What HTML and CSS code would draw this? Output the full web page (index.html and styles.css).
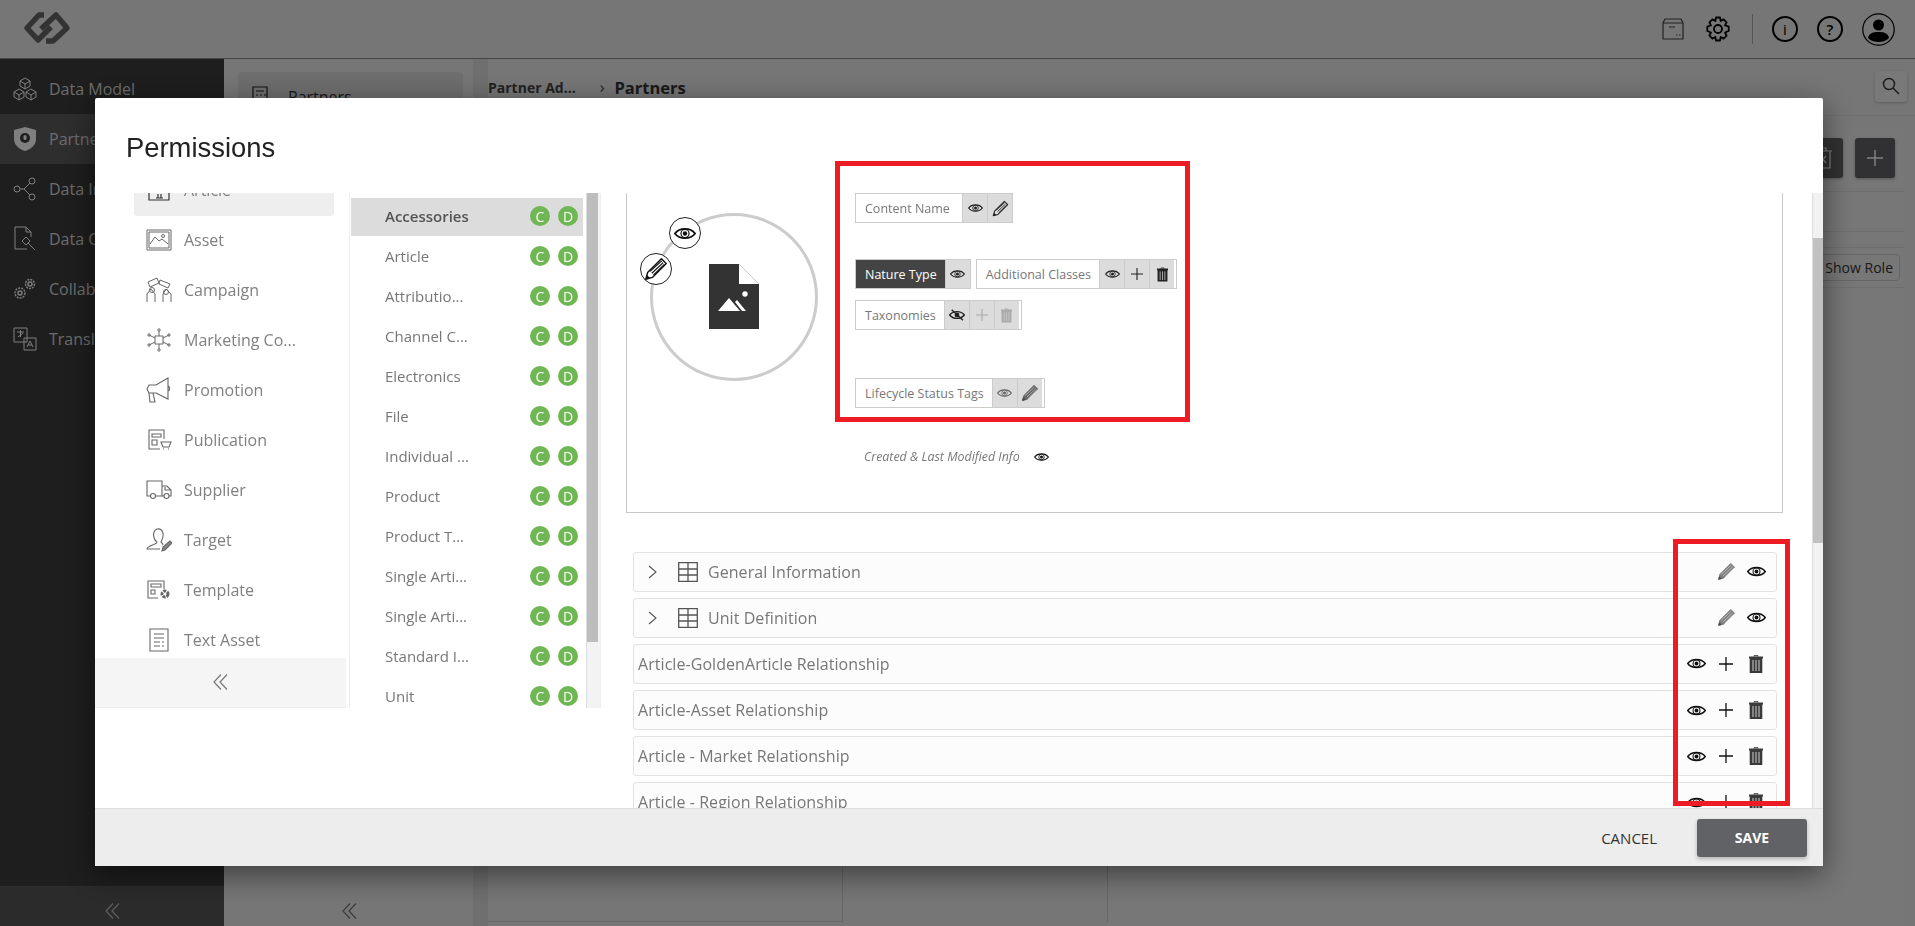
FILE: index.html
```html
<!DOCTYPE html>
<html lang="en">
<head>
    <meta charset="UTF-8">
    <title>Permissions</title>
    <link rel="stylesheet" href="styles.css">
</head>
<body>

    <!-- Shared icons -->
    <svg class="sprite" xmlns="http://www.w3.org/2000/svg">
        <symbol id="i-eye" viewBox="0 0 24 16">
            <path d="M1 8C6 1.2 18 1.2 23 8C18 14.8 6 14.8 1 8Z" fill="none" stroke="currentColor" stroke-width="2"/>
            <circle cx="12" cy="8" r="4.400" fill="none" stroke="currentColor" stroke-width="1.300"/>
            <circle cx="12" cy="8" r="2.400" fill="currentColor"/>
        </symbol>
        <symbol id="i-eye-off" viewBox="0 0 24 18">
            <path d="M1 9C6 2.200 18 2.200 23 9C18 15.800 6 15.800 1 9Z" fill="none" stroke="currentColor" stroke-width="2"/>
            <circle cx="12" cy="9" r="3.600" fill="currentColor"/>
            <path d="M4 1L21 17" stroke="currentColor" stroke-width="2"/>
        </symbol>
        <symbol id="i-pencil" viewBox="0 0 20 20">
            <path d="M1.500 18.500L3 13L14.500 1.500L18.500 5.500L7 17Z" fill="none" stroke="currentColor" stroke-width="1.200" stroke-linejoin="round"/>
            <path d="M5 12L14.800 3.200M6.500 13.500L16 4.700M8 15L17 6.200" stroke="currentColor" stroke-width="1"/>
            <path d="M1.500 18.500L2.500 15L5 17.500Z" fill="currentColor"/>
        </symbol>
        <symbol id="i-pencil-solid" viewBox="0 0 20 20">
            <path d="M1.500 18.500L3 13L14.500 1.500L18.500 5.500L7 17Z" fill="currentColor" stroke="currentColor" stroke-width="1" stroke-linejoin="round"/>
            <path d="M4.500 13L14.800 3.500M6.500 14.500L16.500 5.200M8 16L17.500 6.800" stroke="#fff" stroke-width=".8" opacity=".6"/>
            <path d="M1.500 18.500L2.500 15L5 17.500Z" fill="#444"/>
        </symbol>
        <symbol id="i-plus" viewBox="0 0 14 14">
            <path d="M7 0V14M0 7H14" stroke="currentColor" stroke-width="1.300"/>
        </symbol>
        <symbol id="i-trash" viewBox="0 0 14 18">
            <path d="M5 1.500V.7H9V1.500" fill="none" stroke="currentColor" stroke-width="1"/>
            <path d="M0 1.500H14V3.500H13.300V18H.7V3.500H0Z" fill="currentColor"/>
            <path d="M4 5V16M7 5V16M10 5V16" stroke="#ccc" stroke-width="1"/>
        </symbol>
        <symbol id="i-grid" viewBox="0 0 20 20">
            <path d="M.7.7H19.300V19.300H.7ZM.7 7H19.300M.7 13H19.300M10 .7V19.300" fill="none" stroke="currentColor" stroke-width="1.300"/>
        </symbol>
        <symbol id="i-collapse" viewBox="0 0 15 16">
            <path d="M8 .5L1 8L8 15.500M14 .5L7 8L14 15.500" fill="none" stroke="currentColor" stroke-width="1.200"/>
        </symbol>
    </svg>

    <div class="app">
        <header class="topbar">
            <svg class="logo" viewBox="0 0 90 58" width="90" height="58">
                <path d="M44 15H39L27 28L38 40L51 27" fill="none" stroke="#666" stroke-width="5.500" stroke-linejoin="round"/>
                <path d="M46 41H53L67 28L56 15L41 29" fill="none" stroke="#666" stroke-width="5.500" stroke-linejoin="round"/>
            </svg>
            <div class="topbar-tools">
                <svg class="tool tool-box" width="22" height="22" viewBox="0 0 22 22" fill="none" stroke="#444" stroke-width="1.200">
                    <path d="M3 1H19L21 5V21H1V5ZM1 5H21M7 9H13M14 17H15.500M17 17H18.500"/>
                </svg>
                <svg class="tool" width="24" height="26" viewBox="0 0 24 26" fill="none" stroke="#000" stroke-width="1.800">
                    <circle cx="12" cy="13" r="4"/>
                    <path d="M10 1.500H14L14.700 5L17.600 3.400L20.600 6.400L19 9.400L22.700 10.500V15L19 16.500L20.600 19.600L17.600 22.600L14.700 21L14 24.500H10L9.300 21L6.400 22.600L3.400 19.600L5 16.500L1.300 15V10.500L5 9.400L3.400 6.400L6.400 3.400L9.300 5Z" stroke-linejoin="round"/>
                </svg>
                <span class="tool-sep"></span>
                <span class="round-tool round-info">i</span>
                <span class="round-tool">?</span>
                <svg class="tool" width="33" height="33" viewBox="0 0 33 33">
                    <circle cx="16.500" cy="16.500" r="15.700" fill="none" stroke="#000" stroke-width="1.200"/>
                    <circle cx="16.500" cy="12" r="5.500" fill="#000"/>
                    <path d="M6 25C7 20 11 19 16.500 19C22 19 26 20 27 25C24 28 20 29 16.500 29C13 29 9 28 6 25Z" fill="#000"/>
                </svg>
            </div>
        </header>

        <div class="app-body">
            <aside class="sidebar">
                <ul class="sidebar-list">
                    <li class="sidebar-item">
                        <svg width="24" height="24" viewBox="0 0 24 24" fill="none" stroke="#fff" stroke-width="1"><path d="M12 1L17 4V9L12 12L7 9V4ZM6 12L11 15V20L6 23L1 20V15ZM18 12L23 15V20L18 23L13 20V15ZM7 4L12 7L17 4M12 7V12M1 15L6 18L11 15M6 18V23M13 15L18 18L23 15M18 18V23"/></svg>
                        Data Model
                    </li>
                    <li class="sidebar-item active">
                        <svg width="24" height="26" viewBox="0 0 24 26"><path d="M12 1L23 4V13C23 19 18 23 12 25C6 23 1 19 1 13V4Z" fill="#fff"/><circle cx="12" cy="12" r="5" fill="#3c3c3c"/><rect x="10.500" y="9" width="3" height="5" rx="1.500" fill="#fff"/></svg>
                        Partner Admin
                    </li>
                    <li class="sidebar-item">
                        <svg width="24" height="24" viewBox="0 0 24 24" fill="none" stroke="#fff" stroke-width="1"><circle cx="4" cy="12" r="3"/><circle cx="19" cy="4" r="3"/><circle cx="19" cy="20" r="3"/><path d="M7 12H11L17 6M11 12L17 18"/></svg>
                        Data Integration
                    </li>
                    <li class="sidebar-item">
                        <svg width="24" height="26" viewBox="0 0 24 26" fill="none" stroke="#fff" stroke-width="1"><path d="M14 23H2V1H13L18 6V11M13 1V6H18M9 15L13 11L17 15L13 19ZM15 17L22 24"/></svg>
                        Data Quality
                    </li>
                    <li class="sidebar-item">
                        <svg width="24" height="24" viewBox="0 0 24 24" fill="none" stroke="#fff" stroke-width="1.400"><circle cx="17" cy="7" r="4.500" stroke-dasharray="2 1"/><circle cx="17" cy="7" r="2"/><circle cx="7" cy="16" r="5" stroke-dasharray="2 1"/><circle cx="7" cy="16" r="2"/></svg>
                        Collaboration
                    </li>
                    <li class="sidebar-item">
                        <svg width="24" height="24" viewBox="0 0 24 24" fill="none" stroke="#fff" stroke-width="1"><path d="M1 1H14V15H1ZM11 11H23V23H11ZM4 5H11M7.500 3V10M5 10L10 6M14 20L17 14L20 20M15 18H19"/></svg>
                        Translations
                    </li>
                </ul>
                <div class="sidebar-foot">
                    <svg class="collapse-icon" width="15" height="16"><use href="#i-collapse"/></svg>
                </div>
            </aside>

            <section class="side-panel">
                <div class="side-column">
                    <div class="side-card">
                        <svg width="20" height="24" viewBox="0 0 20 24" fill="none" stroke="#222" stroke-width="1.200"><path d="M2 23V2H16V18M5 6H13M5 10H7M9 10H11M13 10H15M5 14H7M9 14H11M13 18L18 18V23H8V20"/></svg>
                        <span>Partners</span>
                    </div>
                    <svg class="side-collapse" width="15" height="16"><use href="#i-collapse"/></svg>
                </div>
                <div class="side-strip"></div>
            </section>

            <main class="main">
                <div class="crumbs">
                    <span class="crumb">Partner Ad...</span>
                    <span class="crumb-sep">&#8250;</span>
                    <span class="crumb-current">Partners</span>
                    <button class="search-button">
                        <svg width="18" height="18" viewBox="0 0 18 18" fill="none" stroke="#333" stroke-width="1.400"><circle cx="7" cy="7" r="5.500"/><path d="M11 11L17 17"/></svg>
                    </button>
                </div>
                <div class="main-columns">
                    <div class="main-col main-col-list"></div>
                    <div class="main-col main-col-mid"></div>
                    <div class="main-col main-col-roles">
                        <div class="roles-toolbar">
                            <span class="dark-button"><svg width="20" height="22" viewBox="0 0 20 22" fill="none" stroke="#fff" stroke-width="1.200"><path d="M1 4H19M7 4V1H13V4M3 4V21H17V4M7 9L13 16M13 9L7 16"/></svg></span>
                            <span class="dark-button"><svg width="16" height="16"><use href="#i-plus"/></svg></span>
                        </div>
                        <div class="roles-row"></div>
                        <div class="roles-row roles-row-button"><span class="role-button">Show Role</span></div>
                    </div>
                </div>
            </main>
        </div>
    </div>

    <!-- Dialog -->
    <div class="overlay">
        <div class="modal">
            <h2 class="modal-title">Permissions</h2>

            <div class="modal-body">
                <div class="nav-col">
                    <div class="nav-scroll">
                        <ul class="nav-list">
                            <li class="nav-item active">
                                <svg width="26" height="24" viewBox="0 0 26 24" fill="none" stroke="#333" stroke-width="1.200"><path d="M3 2H23V22H3ZM12 16V20M15 16V20M10 20H17"/></svg>
                                Article
                            </li>
                            <li class="nav-item">
                                <svg width="26" height="22" viewBox="0 0 26 22" fill="none" stroke="#666" stroke-width="1"><path d="M1 1H25V21H1ZM3 3H23V19H3ZM4 15L9 8L13 12L16 10L22 15"/><circle cx="17" cy="7" r="1.500"/></svg>
                                Asset
                            </li>
                            <li class="nav-item">
                                <svg width="26" height="26" viewBox="0 0 26 26" fill="none" stroke="#666" stroke-width="1"><path d="M2 5L11 1L13 6L4 10ZM14 3L24 7L22 11L13 7ZM1 25V17L5 12L9 17V25M17 25V17L20 12L25 17V25"/><circle cx="6" cy="13" r="2.500"/><circle cx="20" cy="15" r="2.500"/></svg>
                                Campaign
                            </li>
                            <li class="nav-item">
                                <svg width="26" height="24" viewBox="0 0 26 24" fill="none" stroke="#666" stroke-width="1"><path d="M9 8H17V16H9ZM13 3V8M13 16V21M3 7L9 10M23 7L17 10M3 17L9 14M23 17L17 14"/><circle cx="13" cy="2" r="1.200"/><circle cx="13" cy="22" r="1.200"/><circle cx="3" cy="7" r="1.200"/><circle cx="23" cy="7" r="1.200"/><circle cx="3" cy="17" r="1.200"/><circle cx="23" cy="17" r="1.200"/></svg>
                                Marketing Co...
                            </li>
                            <li class="nav-item">
                                <svg width="26" height="26" viewBox="0 0 26 26" fill="none" stroke="#666" stroke-width="1.100"><path d="M22 1V22L10 16H3L1 12L3 8H10ZM7 16L9 25H4L3 16M22 9C24 9 24 14 22 14"/></svg>
                                Promotion
                            </li>
                            <li class="nav-item">
                                <svg width="26" height="22" viewBox="0 0 26 22" fill="none" stroke="#666" stroke-width="1.100"><path d="M18 10V1H3V20H14M6 5H15V8H6ZM6 11H11V16H6ZM15 13H25L23 18H17L15 13ZM17 20H18M22 20H23"/></svg>
                                Publication
                            </li>
                            <li class="nav-item">
                                <svg width="26" height="20" viewBox="0 0 26 20" fill="none" stroke="#666" stroke-width="1.100"><path d="M5 16H1V1H16V16H9M16 6H21L25 10V16H23M16 16H18M19 7V10H25"/><circle cx="7" cy="16" r="2.500"/><circle cx="20.500" cy="16" r="2.500"/></svg>
                                Supplier
                            </li>
                            <li class="nav-item">
                                <svg width="26" height="24" viewBox="0 0 26 24" fill="none" stroke="#666" stroke-width="1.100"><path d="M11 14C7 11 6 3 11 1C17 0 19 7 15 14C16 15 17 16 17 17M11 14C11 17 1 17 1 21H14"/><path d="M16 23L17 19L24 13L26 15L19 22Z" fill="#888"/></svg>
                                Target
                            </li>
                            <li class="nav-item">
                                <svg width="26" height="20" viewBox="0 0 26 20" fill="none" stroke="#666" stroke-width="1.100"><path d="M18 9V1H2V18H12M5 4H15V7H5ZM5 10H9V14H5Z"/><circle cx="19" cy="14" r="3" stroke-width="3" stroke-dasharray="3 1"/></svg>
                                Template
                            </li>
                            <li class="nav-item">
                                <svg width="26" height="24" viewBox="0 0 26 24" fill="none" stroke="#666" stroke-width="1.100"><path d="M4 1H22V23H4ZM8 6H18M8 10H18M8 14H14M16 14H18M8 18H14M16 18H18"/></svg>
                                Text Asset
                            </li>
                        </ul>
                    </div>
                    <div class="nav-collapse">
                        <svg width="15" height="16"><use href="#i-collapse"/></svg>
                    </div>
                </div>

                <div class="type-col">
                    <ul class="type-list">
                        <li class="type-item active"><span>Accessories</span><b class="badge">C</b><b class="badge">D</b></li>
                        <li class="type-item"><span>Article</span><b class="badge">C</b><b class="badge">D</b></li>
                        <li class="type-item"><span>Attributio...</span><b class="badge">C</b><b class="badge">D</b></li>
                        <li class="type-item"><span>Channel C...</span><b class="badge">C</b><b class="badge">D</b></li>
                        <li class="type-item"><span>Electronics</span><b class="badge">C</b><b class="badge">D</b></li>
                        <li class="type-item"><span>File</span><b class="badge">C</b><b class="badge">D</b></li>
                        <li class="type-item"><span>Individual ...</span><b class="badge">C</b><b class="badge">D</b></li>
                        <li class="type-item"><span>Product</span><b class="badge">C</b><b class="badge">D</b></li>
                        <li class="type-item"><span>Product T...</span><b class="badge">C</b><b class="badge">D</b></li>
                        <li class="type-item"><span>Single Arti...</span><b class="badge">C</b><b class="badge">D</b></li>
                        <li class="type-item"><span>Single Arti...</span><b class="badge">C</b><b class="badge">D</b></li>
                        <li class="type-item"><span>Standard I...</span><b class="badge">C</b><b class="badge">D</b></li>
                        <li class="type-item"><span>Unit</span><b class="badge">C</b><b class="badge">D</b></li>
                    </ul>
                    <div class="type-scroll"><div class="type-thumb"></div></div>
                </div>

                <div class="detail-col">
                    <div class="preview-box">
                        <div class="circle">
                            <span class="bubble bubble-eye"><svg width="22" height="15"><use href="#i-eye"/></svg></span>
                            <span class="bubble bubble-pencil"><svg width="24" height="24"><use href="#i-pencil"/></svg></span>
                            <svg width="50" height="65" viewBox="0 0 50 65">
                                <path d="M0 0H30L50 20V65H0Z" fill="#333"/>
                                <path d="M30 0V20H50Z" fill="#fff"/>
                                <path d="M9 47L20 34L31 47ZM26 38L28 36L37 47H33Z" fill="#fff"/>
                                <circle cx="36" cy="30" r="2.700" fill="#fff"/>
                            </svg>
                        </div>
                        <div class="chips">
                            <div class="chip-row">
                                <div class="chip chip-wide">
                                    <span class="chip-label">Content Name</span>
                                    <span class="chip-cell"><svg width="15" height="10"><use href="#i-eye"/></svg></span>
                                    <span class="chip-cell"><svg width="17" height="17"><use href="#i-pencil"/></svg></span>
                                </div>
                            </div>
                            <div class="chip-row chip-row-second">
                                <div class="chip chip-dark">
                                    <span class="chip-label">Nature Type</span>
                                    <span class="chip-cell"><svg width="15" height="10"><use href="#i-eye"/></svg></span>
                                </div>
                                <div class="chip chip-pad">
                                    <span class="chip-label">Additional Classes</span>
                                    <span class="chip-cell"><svg width="15" height="10"><use href="#i-eye"/></svg></span>
                                    <span class="chip-cell"><svg width="12" height="12"><use href="#i-plus"/></svg></span>
                                    <span class="chip-cell"><svg width="11" height="15"><use href="#i-trash"/></svg></span>
                                </div>
                            </div>
                            <div class="chip-row chip-row-third">
                                <div class="chip chip-pad">
                                    <span class="chip-label">Taxonomies</span>
                                    <span class="chip-cell"><svg width="16" height="12"><use href="#i-eye-off"/></svg></span>
                                    <span class="chip-cell muted"><svg width="12" height="12"><use href="#i-plus"/></svg></span>
                                    <span class="chip-cell muted"><svg width="11" height="15"><use href="#i-trash"/></svg></span>
                                </div>
                            </div>
                            <div class="chip-row chip-row-fourth">
                                <div class="chip chip-pad">
                                    <span class="chip-label">Lifecycle Status Tags</span>
                                    <span class="chip-cell soft"><svg width="15" height="10"><use href="#i-eye"/></svg></span>
                                    <span class="chip-cell soft"><svg width="18" height="18"><use href="#i-pencil-solid"/></svg></span>
                                </div>
                            </div>
                            <div class="created-info">
                                <span>Created &amp; Last Modified Info</span>
                                <svg width="15" height="10"><use href="#i-eye"/></svg>
                            </div>
                        </div>
                    </div>

                    <div class="section-rows">
                        <div class="section-row">
                            <svg class="row-chevron" width="9" height="14" viewBox="0 0 9 14"><path d="M1 1L8 7L1 13" fill="none" stroke="#555" stroke-width="1.100"/></svg>
                            <svg class="row-grid" width="20" height="20"><use href="#i-grid"/></svg>
                            <span class="row-title">General Information</span>
                            <span class="row-action soft"><svg width="19" height="19"><use href="#i-pencil-solid"/></svg></span>
                            <span class="row-action"><svg width="19" height="13"><use href="#i-eye"/></svg></span>
                        </div>
                        <div class="section-row">
                            <svg class="row-chevron" width="9" height="14" viewBox="0 0 9 14"><path d="M1 1L8 7L1 13" fill="none" stroke="#555" stroke-width="1.100"/></svg>
                            <svg class="row-grid" width="20" height="20"><use href="#i-grid"/></svg>
                            <span class="row-title">Unit Definition</span>
                            <span class="row-action soft"><svg width="19" height="19"><use href="#i-pencil-solid"/></svg></span>
                            <span class="row-action"><svg width="19" height="13"><use href="#i-eye"/></svg></span>
                        </div>
                        <div class="section-row">
                            <span class="row-title">Article-GoldenArticle Relationship</span>
                            <span class="row-action"><svg width="19" height="13"><use href="#i-eye"/></svg></span>
                            <span class="row-action"><svg width="14" height="14"><use href="#i-plus"/></svg></span>
                            <span class="row-action dark"><svg width="14" height="18"><use href="#i-trash"/></svg></span>
                        </div>
                        <div class="section-row">
                            <span class="row-title">Article-Asset Relationship</span>
                            <span class="row-action"><svg width="19" height="13"><use href="#i-eye"/></svg></span>
                            <span class="row-action"><svg width="14" height="14"><use href="#i-plus"/></svg></span>
                            <span class="row-action dark"><svg width="14" height="18"><use href="#i-trash"/></svg></span>
                        </div>
                        <div class="section-row">
                            <span class="row-title">Article - Market Relationship</span>
                            <span class="row-action"><svg width="19" height="13"><use href="#i-eye"/></svg></span>
                            <span class="row-action"><svg width="14" height="14"><use href="#i-plus"/></svg></span>
                            <span class="row-action dark"><svg width="14" height="18"><use href="#i-trash"/></svg></span>
                        </div>
                        <div class="section-row">
                            <span class="row-title">Article - Region Relationship</span>
                            <span class="row-action"><svg width="19" height="13"><use href="#i-eye"/></svg></span>
                            <span class="row-action"><svg width="14" height="14"><use href="#i-plus"/></svg></span>
                            <span class="row-action dark"><svg width="14" height="18"><use href="#i-trash"/></svg></span>
                        </div>
                    </div>
                </div>

                <div class="modal-scroll"><div class="modal-thumb"></div></div>
            </div>

            <div class="modal-footer">
                <button class="cancel-button">CANCEL</button>
                <button class="save-button">SAVE</button>
            </div>

            <!-- Red annotation boxes -->
            <div class="mark mark-chips"></div>
            <div class="mark mark-actions"></div>
        </div>
    </div>

</body>
</html>
```

FILE: styles.css
```css
/* Basic reset */
* {
    margin: 0;
    padding: 0;
    box-sizing: border-box;
}

body {
    width: 1915px;
    height: 926px;
    overflow: hidden;
    font-family: 'Open Sans', sans-serif;
    color: #777;
    background-color: #ececec;
}

ul {
    list-style: none;
}

button {
    font-family: inherit;
    border: none;
    background: none;
}

.sprite {
    display: none;
}

/* Page behind the dialog */
.app {
    display: flex;
    flex-direction: column;
    height: 926px;
}

.topbar {
    display: flex;
    justify-content: space-between;
    align-items: center;
    flex: none;
    height: 59px;
    border-bottom: 1px solid #888;
    background-color: #ececec;
}

.logo {
    display: block;
}

.topbar-tools {
    display: flex;
    align-items: center;
    padding-right: 20px;
}

.tool {
    display: block;
}

.tool-box {
    margin-right: 22px;
}

.tool-sep {
    width: 1px;
    height: 30px;
    margin: 0 19px 0 22px;
    background-color: #aaa;
}

.round-tool {
    display: flex;
    justify-content: center;
    align-items: center;
    width: 26px;
    height: 26px;
    margin-right: 19px;
    border: 2px solid #000;
    border-radius: 50%;
    font-size: 15px;
    font-weight: 600;
    color: #000;
}

.round-info {
    font-weight: 400;
}

.app-body {
    display: flex;
    flex: 1;
    min-height: 0;
}

.sidebar {
    display: flex;
    flex-direction: column;
    width: 224px;
    background-color: #3c3c3c;
}

.sidebar-list {
    flex: 1;
    padding-top: 5px;
}

.sidebar-item {
    display: flex;
    align-items: center;
    gap: 12px;
    height: 50px;
    padding-left: 13px;
    font-size: 16px;
    color: #d8d8d8;
}

.sidebar-item.active {
    background-color: #5c5c5c;
}

.sidebar-foot {
    display: flex;
    justify-content: center;
    align-items: center;
    height: 40px;
    padding-top: 10px;
    background-color: #565656;
    color: #bbb;
}

.side-panel {
    display: flex;
    width: 264px;
}

.side-column {
    display: flex;
    flex-direction: column;
    justify-content: space-between;
    width: 249px;
    padding: 13px 10px 7px 14px;
}

.side-card {
    display: flex;
    align-items: center;
    gap: 17px;
    height: 50px;
    padding-left: 13px;
    border-radius: 4px;
    font-size: 16px;
    color: #333;
    background-color: #dcdcdc;
}

.side-collapse {
    align-self: center;
    margin-left: -2px;
    color: #777;
}

.side-strip {
    width: 15px;
    background-color: #dedede;
}

.main {
    display: flex;
    flex-direction: column;
    flex: 1;
    min-width: 0;
}

.crumbs {
    display: flex;
    align-items: center;
    flex: none;
    height: 57px;
    padding: 0 8px 0 0;
    border-bottom: 1px solid #ddd;
}

.crumb {
    font-size: 14px;
    font-weight: 700;
    color: #444;
}

.crumb-sep {
    margin: 0 10px 0 24px;
    color: #444;
}

.crumb-current {
    flex: 1;
    font-size: 16.5px;
    font-weight: 700;
    color: #333;
}

.search-button {
    display: flex;
    justify-content: center;
    align-items: center;
    width: 32px;
    height: 31px;
    margin-top: -2px;
    border-radius: 3px;
    background-color: #f2f2f2;
    box-shadow: 0 1px 3px rgba(0, 0, 0, 0.2);
}

.main-columns {
    display: flex;
    flex: 1;
}

.main-col {
    flex: none;
    height: 806px;
    border-right: 1px solid #ccc;
}

.main-col-list {
    width: 355px;
    border-bottom: 1px solid #d0d0d0;
}

.main-col-mid {
    width: 265px;
}

.main-col-roles {
    width: 797px;
    margin-top: 12px;
    border-right: 0;
    background-color: #eee;
}

.roles-toolbar {
    display: flex;
    justify-content: flex-end;
    gap: 12px;
    height: 64px;
    padding: 10px 10px 0 0;
    border-bottom: 1px solid #ddd;
}

.dark-button {
    display: flex;
    justify-content: center;
    align-items: center;
    width: 40px;
    height: 40px;
    border-radius: 3px;
    color: #fff;
    background-color: #636366;
    box-shadow: 0 1px 3px rgba(0, 0, 0, 0.3);
}

.roles-row {
    height: 40px;
    border-bottom: 1px solid #ddd;
}

.roles-row-button {
    display: flex;
    justify-content: flex-end;
    align-items: center;
    height: 41px;
    margin-top: 15px;
    padding: 0 5px 1px 0;
    border-top: 1px solid #ddd;
}

.role-button {
    padding: 3px 6px 3px 14px;
    border: 1px solid #ccc;
    border-radius: 4px;
    font-size: 14px;
    color: #333;
}

/* Dialog */
.overlay {
    position: fixed;
    top: 0;
    left: 0;
    width: 1915px;
    height: 926px;
    background-color: rgba(0, 0, 0, 0.5);
}

.modal {
    position: absolute;
    top: 98px;
    left: 95px;
    display: flex;
    flex-direction: column;
    width: 1728px;
    height: 768px;
    border-radius: 2px;
    background-color: white;
    box-shadow: 0 8px 30px rgba(0, 0, 0, 0.5);
}

.modal-title {
    flex: none;
    height: 95px;
    padding: 32px 0 0 31px;
    font-family: 'Liberation Sans', Arial, sans-serif;
    font-size: 27.4px;
    font-weight: 400;
    line-height: 36px;
    color: #222;
}

.modal-body {
    display: flex;
    flex: none;
    height: 615px;
    overflow: hidden;
}

/* Left navigation */
.nav-col {
    flex: none;
    width: 251px;
    height: 515px;
}

.nav-scroll {
    height: 465px;
    padding-left: 39px;
    overflow: hidden;
}

.nav-list {
    margin-top: -27px;
}

.nav-item {
    display: flex;
    align-items: center;
    height: 50px;
    width: 200px;
    padding: 0 0 2px 12px;
    border-radius: 3px;
    font-size: 16px;
    color: #808080;
}

.nav-item svg {
    flex: none;
    margin-right: 12px;
}

.nav-item.active {
    background-color: #eee;
}

.nav-collapse {
    display: flex;
    justify-content: center;
    align-items: center;
    height: 50px;
    padding-bottom: 2px;
    border-bottom: 1px solid #eee;
    color: #777;
    background-color: #f5f5f5;
}

/* Middle list */
.type-col {
    display: flex;
    flex: none;
    width: 252px;
    height: 515px;
    margin-left: 3px;
    border-left: 1px solid #eee;
}

.type-list {
    width: 236px;
    padding: 5px 0 0 1px;
    overflow: hidden;
}

.type-item {
    display: flex;
    align-items: center;
    width: 232px;
    height: 38px;
    margin-bottom: 2px;
    padding: 0 0 2px 34px;
    font-size: 15px;
    color: #777;
}

.type-item span {
    flex: 1;
}

.type-item.active {
    background-color: #dcdcdc;
}

.type-item.active span {
    font-weight: 600;
    color: #555;
}

.badge {
    display: flex;
    justify-content: center;
    align-items: center;
    width: 20px;
    height: 20px;
    margin-right: 8px;
    border-radius: 50%;
    font-size: 14px;
    font-weight: 400;
    color: white;
    background-color: #6fb654;
}

.badge + .badge {
    margin-right: 5px;
}

.type-scroll {
    flex: none;
    width: 15px;
    border-right: 1px solid #eee;
    background-color: #f3f3f3;
    border-left: 1px solid #ddd;
}

.type-thumb {
    width: 11px;
    height: 449px;
    background-color: #bdbdbd;
}

/* Detail panel */
.detail-col {
    flex: none;
    width: 1211px;
    padding-left: 25px;
    overflow: hidden;
}

.preview-box {
    display: flex;
    width: 1157px;
    height: 320px;
    border: 1px solid #c8c8c8;
    border-top: none;
}

.circle {
    position: relative;
    display: flex;
    justify-content: center;
    align-items: center;
    flex: none;
    width: 168px;
    height: 168px;
    margin: 20px 0 0 23px;
    padding-bottom: 2px;
    border: 3px solid #ccc;
    border-radius: 50%;
}

.bubble {
    position: absolute;
    display: flex;
    justify-content: center;
    align-items: center;
    width: 32px;
    height: 32px;
    border: 1px solid #222;
    border-radius: 50%;
    color: #111;
    background-color: white;
}

.bubble-eye {
    top: 1px;
    left: 16px;
}

.bubble-pencil {
    top: 37px;
    left: -13px;
}

.chips {
    margin-left: 37px;
}

.chip-row {
    display: flex;
    gap: 5px;
}

.chip-row-second {
    margin-top: 36px;
}

.chip-row-third {
    margin-top: 11px;
}

.chip-row-fourth {
    margin-top: 48px;
}

.chip {
    display: flex;
    height: 30px;
    border: 1px solid #ccc;
    background-color: white;
}

.chip-pad {
    padding-right: 2px;
}

.chip-label {
    display: flex;
    align-items: center;
    padding: 0 8px 0 9px;
    font-size: 12.5px;
    color: #777;
}

.chip-wide .chip-label {
    width: 106px;
}

.chip-cell {
    display: flex;
    justify-content: center;
    align-items: center;
    width: 25px;
    border-left: 1px solid #ccc;
    color: #222;
    background-color: #dcdcdc;
}

.chip-cell.muted {
    color: #aaa;
}

.chip-cell.soft {
    color: #666;
}

.chip-dark .chip-label {
    color: white;
    background-color: #444;
}

.created-info {
    display: flex;
    align-items: center;
    gap: 14px;
    margin: 40px 0 0 9px;
    font-size: 12.4px;
    font-style: italic;
    color: #777;
}

.created-info svg {
    color: #111;
}

/* Section rows */
.section-rows {
    margin: 38.5px 0 0 7px;
}

.section-row {
    display: flex;
    align-items: center;
    width: 1144px;
    height: 40px;
    margin-bottom: 6.2px;
    padding: 0 5px 0 4px;
    border: 1px solid #e2e2e2;
    border-radius: 3px;
    background-color: #fcfcfc;
}

.row-chevron {
    flex: none;
    margin-left: 10px;
}

.row-grid {
    flex: none;
    margin: 0 10px 0 21px;
    color: #555;
}

.row-title {
    flex: 1;
    font-size: 16px;
    letter-spacing: 0.06px;
    color: #777;
}

.row-action {
    display: flex;
    justify-content: center;
    align-items: center;
    width: 30px;
    color: #111;
}

.row-action.soft {
    color: #808080;
}

.row-action.dark {
    color: #3a3a3a;
}

.modal-scroll {
    flex: none;
    width: 11px;
    padding-top: 45px;
    border-left: 1px solid #ddd;
    background-color: #f1f1f1;
}

.modal-thumb {
    height: 305px;
    background-color: #c1c1c1;
}

/* Footer */
.modal-footer {
    display: flex;
    justify-content: flex-end;
    align-items: center;
    gap: 40px;
    flex: none;
    height: 58px;
    padding: 0 16px 0 0;
    border-top: 1px solid #ddd;
    background-color: #ededed;
}

.cancel-button {
    font-size: 15px;
    color: #333;
}

.save-button {
    width: 110px;
    height: 38px;
    border-radius: 3px;
    font-size: 14px;
    font-weight: 700;
    color: white;
    background-color: #616266;
    box-shadow: 0 2px 4px rgba(0, 0, 0, 0.25);
}

/* Annotation boxes drawn over the screenshot */
.mark {
    position: absolute;
    border: 5px solid #ed1c24;
}

.mark-chips {
    top: 63px;
    left: 740px;
    width: 355px;
    height: 261px;
}

.mark-actions {
    top: 441px;
    left: 1578px;
    width: 117px;
    height: 267px;
}
```
